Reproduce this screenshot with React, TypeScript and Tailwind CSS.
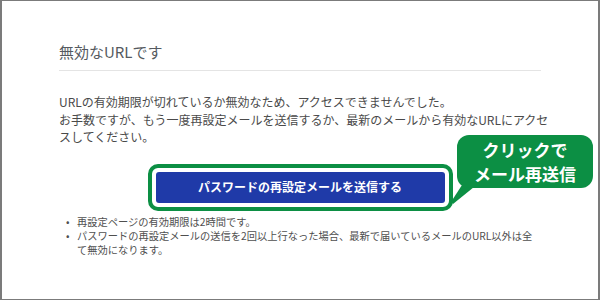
import React from "react";

export default function App() {
  return (
    <div
      className="relative w-[600px] h-[300px] box-border bg-white border-x-2 border-y border-[#7b7b7b] overflow-hidden"
      style={{ fontFamily: '"Noto Sans CJK JP", "Noto Sans", sans-serif' }}
    >
      <div className="flex flex-col px-[57px] pt-[40px]">
        <h1 className="text-[15px] leading-[22px] text-[#555a60] font-normal">無効なURLです</h1>
        <div className="mt-[7px] h-px bg-[#e4e4e4]" />
        <p className="mt-[22px] text-[12px] leading-[17.5px] text-[#4a4a4a] whitespace-nowrap">
          URLの有効期限が切れているか無効なため、アクセスできませんでした。
          <br />
          お手数ですが、もう一度再設定メールを送信するか、最新のメールから有効なURLにアクセ
          <br />
          スしてください。
        </p>
        <div className="mt-[18px] flex justify-center">
          <div className="border-4 border-[#0c8f44] rounded-[10px] p-[4px]">
            <button className="w-[289px] h-[31px] rounded-[3px] bg-[#1f3aa8] text-white text-[12px] font-bold flex items-center justify-center">
              パスワードの再設定メールを送信する
            </button>
          </div>
        </div>
        <ul className="mt-[4px] text-[10.25px] leading-[14px] text-[#4f4f4f] whitespace-nowrap">
          <li className="flex">
            <span className="w-[18px] pl-[7px] shrink-0">•</span>
            <span>再設定ページの有効期限は2時間です。</span>
          </li>
          <li className="flex">
            <span className="w-[18px] pl-[7px] shrink-0">•</span>
            <span>
              パスワードの再設定メールの送信を2回以上行なった場合、最新で届いているメールのURL以外は全
              <br />
              て無効になります。
            </span>
          </li>
        </ul>
      </div>

      <svg className="absolute left-[438px] top-[168px]" width="40" height="40" viewBox="0 0 40 40">
        <polygon points="11,33 22,16 34,18 13,35" fill="#0c8f44" />
      </svg>
      <div className="absolute left-[455px] top-[134px] w-[136px] h-[53px] rounded-[12px] bg-[#0c8f44] flex flex-col items-center justify-center text-white font-bold text-[17px] leading-[24px]">
        <span>クリックで</span>
        <span>メール再送信</span>
      </div>
    </div>
  );
}
